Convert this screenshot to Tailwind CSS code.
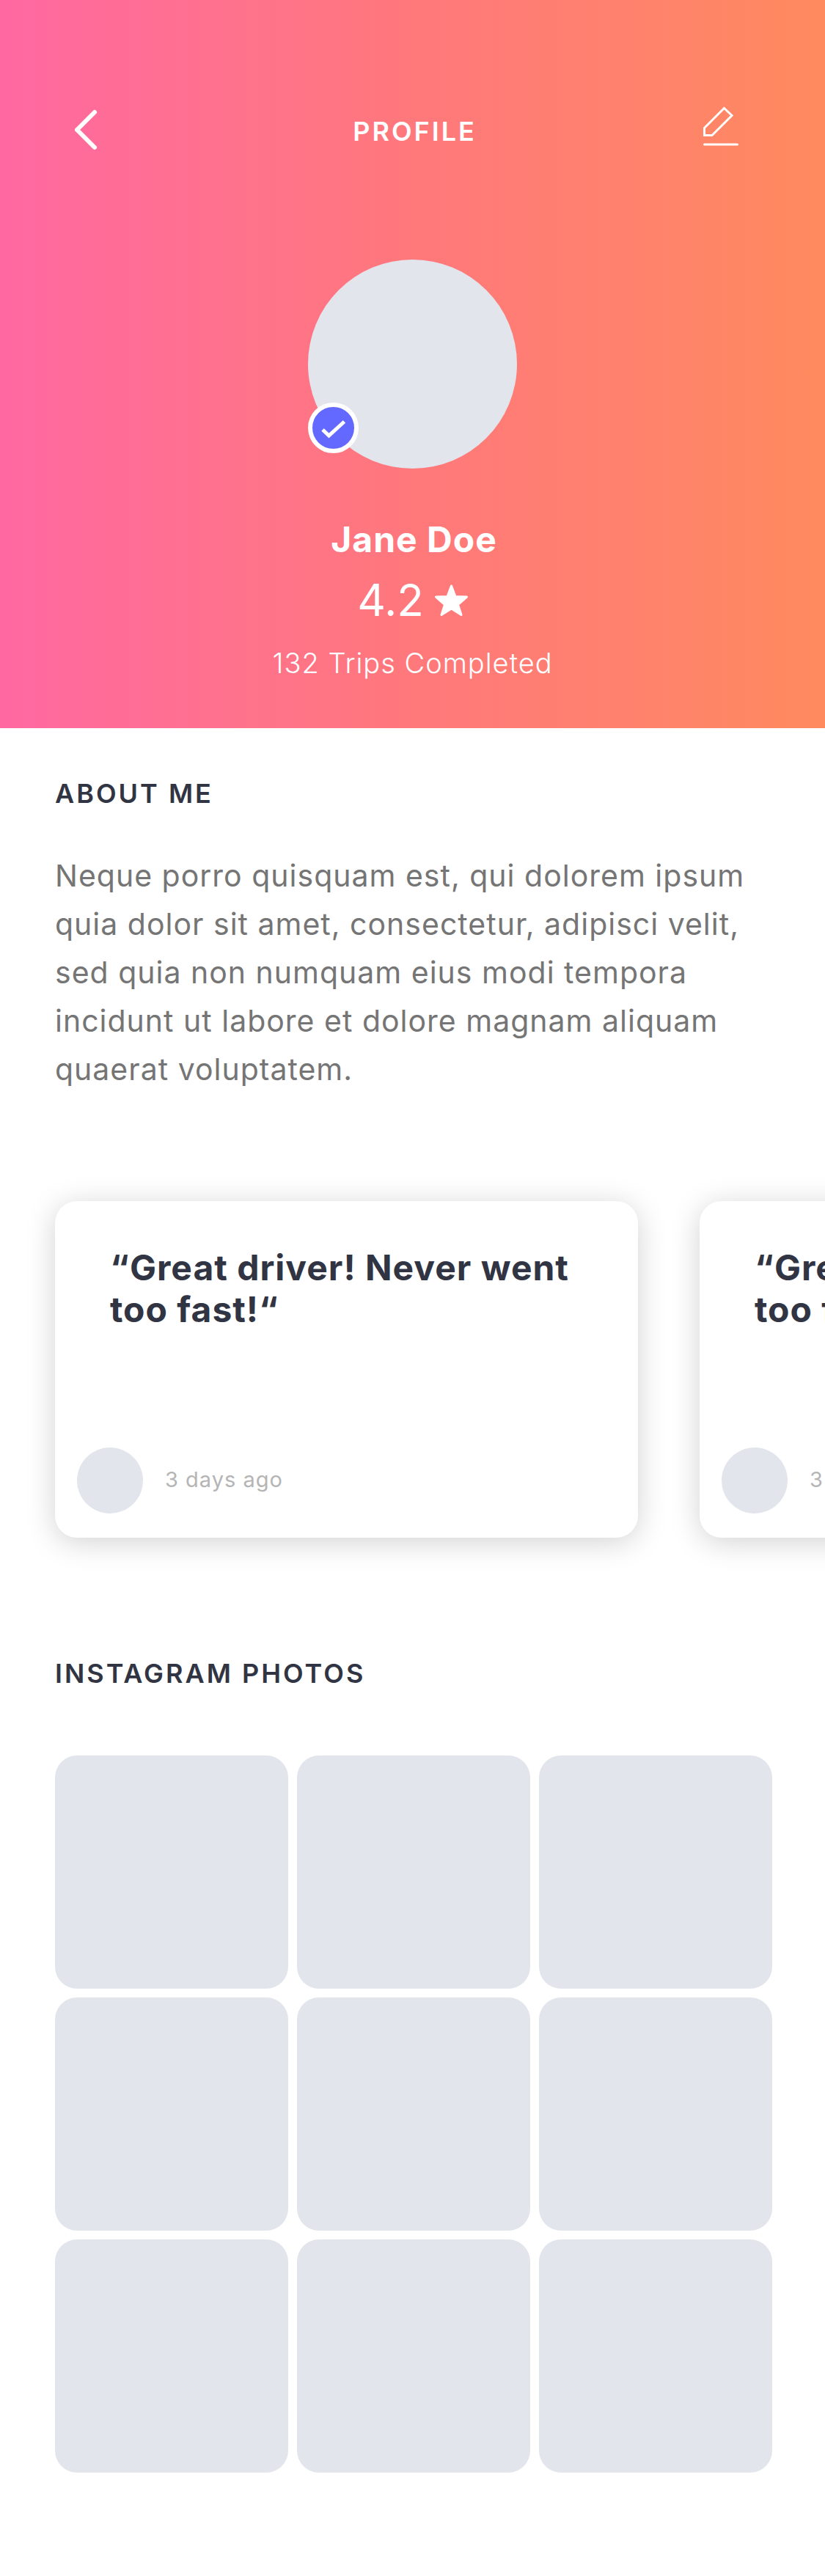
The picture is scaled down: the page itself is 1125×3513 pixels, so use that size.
<!DOCTYPE html>
<html lang="en">
<head>
<meta charset="utf-8">
<meta name="viewport" content="width=device-width, initial-scale=1">
<title>Profile</title>
<script src="https://cdn.jsdelivr.net/npm/@tailwindcss/browser@4"></script>
</head>
<body class="bg-white font-['Inter',sans-serif] text-[#313543]">
<header class="bg-linear-to-r from-[#ff68a1] via-[#ff787b] to-[#ff8a5e] px-[75px] pt-[141px] pb-[65px] text-white">
  <nav class="flex items-center justify-between">
    <button type="button" aria-label="Back" class="h-[72px] w-[96px]">
      <svg viewBox="0 0 96 72" fill="none" stroke="currentColor" class="h-full w-full" stroke-width="6" stroke-linecap="round" stroke-linejoin="round"><path d="M54 12 30 36l24 24"/></svg>
    </button>
    <h1 class="pt-1 pl-[6px] text-[36px] leading-[42px] font-semibold tracking-[3px]">PROFILE</h1>
    <button type="button" aria-label="Edit profile" class="h-[72px] w-[96px]">
      <svg viewBox="0 0 96 72" fill="none" stroke="currentColor" class="h-full w-full" stroke-width="3" stroke-linecap="round" stroke-linejoin="miter"><path d="M33.500 6.500 6.500 33.500v10H17l27-27zM6.500 56h45"/></svg>
    </button>
  </nav>
  <section class="mt-[141px] flex flex-col items-center">
    <div class="relative size-[285px] rounded-full bg-[#e2e5ec]">
      <span class="absolute bottom-[21px] left-0 size-[69px] rounded-full border-[6px] border-white bg-[#6369ff]">
        <svg viewBox="6 6 57 57" fill="none" stroke="white" stroke-width="5" class="h-full w-full"><path d="M20 37l8.500 8L49.500 26"/></svg>
      </span>
    </div>
    <h2 class="mt-[68px] pl-1 text-[48px] leading-[57px] font-bold tracking-[1px]">Jane Doe</h2>
    <p class="mt-[18px] flex items-center gap-[15px] text-[60px] leading-[72px] font-normal">4.2
      <svg viewBox="0 0 45 43" class="h-[43px] w-[45px]" fill="white" stroke="white" stroke-width="3" stroke-linejoin="round" role="img" aria-label="stars"><path d="M22.500 2 28 16.500 43.500 17 31.500 27.500 36 41.500 22.500 33 9 41.500 13.500 27.500 1.500 17 17 16.500z"/></svg>
    </p>
    <p class="mt-[26px] text-[38px] leading-[48px] font-light tracking-[1px]">132 Trips Completed</p>
  </section>
</header>
<main>
  <section class="px-[75px] pt-[68px]">
    <h2 class="text-[36px] leading-[42px] font-semibold tracking-[3px]">ABOUT ME</h2>
    <p class="mt-[58px] text-[41px] leading-[66px] tracking-[1px] text-[#757575]">Neque porro quisquam est, qui dolorem ipsum quia dolor sit amet, consectetur, adipisci velit, sed quia non numquam eius modi tempora incidunt ut labore et dolore magnam aliquam quaerat voluptatem.</p>
  </section>
  <section aria-label="Reviews" class="mt-[87px] flex gap-[84px] overflow-x-auto px-[75px] py-[60px] [scrollbar-width:none]">
    <article class="flex h-[459px] w-[795px] shrink-0 flex-col justify-between rounded-[30px] bg-white px-[30px] pt-[62px] pb-[33px] shadow-[0_6px_40px_rgba(0,0,0,0.18)]">
      <blockquote class="px-[45px] text-[48px] leading-[57px] font-bold tracking-[1px]">“Great driver! Never went too fast!“</blockquote>
      <footer class="flex items-center gap-[30px]"><span class="size-[90px] rounded-full bg-[#e2e5ec]"></span><time class="pb-[2px] text-[29px] leading-[36px] tracking-[1px] text-[#b5b5b5]">3 days ago</time></footer>
    </article>
    <article class="flex h-[459px] w-[795px] shrink-0 flex-col justify-between rounded-[30px] bg-white px-[30px] pt-[62px] pb-[33px] shadow-[0_6px_40px_rgba(0,0,0,0.18)]">
      <blockquote class="px-[45px] text-[48px] leading-[57px] font-bold tracking-[1px]">“Great driver! Never went too fast!“</blockquote>
      <footer class="flex items-center gap-[30px]"><span class="size-[90px] rounded-full bg-[#e2e5ec]"></span><time class="pb-[2px] text-[29px] leading-[36px] tracking-[1px] text-[#b5b5b5]">3 days ago</time></footer>
    </article>
  </section>
  <section class="pt-[104px] pr-[72px] pb-[141px] pl-[75px]">
    <h2 class="text-[36px] leading-[42px] font-semibold tracking-[3px]">INSTAGRAM PHOTOS</h2>
    <ul class="mt-[91px] grid grid-cols-3 gap-[12px]">
      <li class="aspect-square rounded-[30px] bg-[#e2e5ec]"></li>
      <li class="aspect-square rounded-[30px] bg-[#e2e5ec]"></li>
      <li class="aspect-square rounded-[30px] bg-[#e2e5ec]"></li>
      <li class="aspect-square rounded-[30px] bg-[#e2e5ec]"></li>
      <li class="aspect-square rounded-[30px] bg-[#e2e5ec]"></li>
      <li class="aspect-square rounded-[30px] bg-[#e2e5ec]"></li>
      <li class="aspect-square rounded-[30px] bg-[#e2e5ec]"></li>
      <li class="aspect-square rounded-[30px] bg-[#e2e5ec]"></li>
      <li class="aspect-square rounded-[30px] bg-[#e2e5ec]"></li>
    </ul>
  </section>
</main>
</body>
</html>
